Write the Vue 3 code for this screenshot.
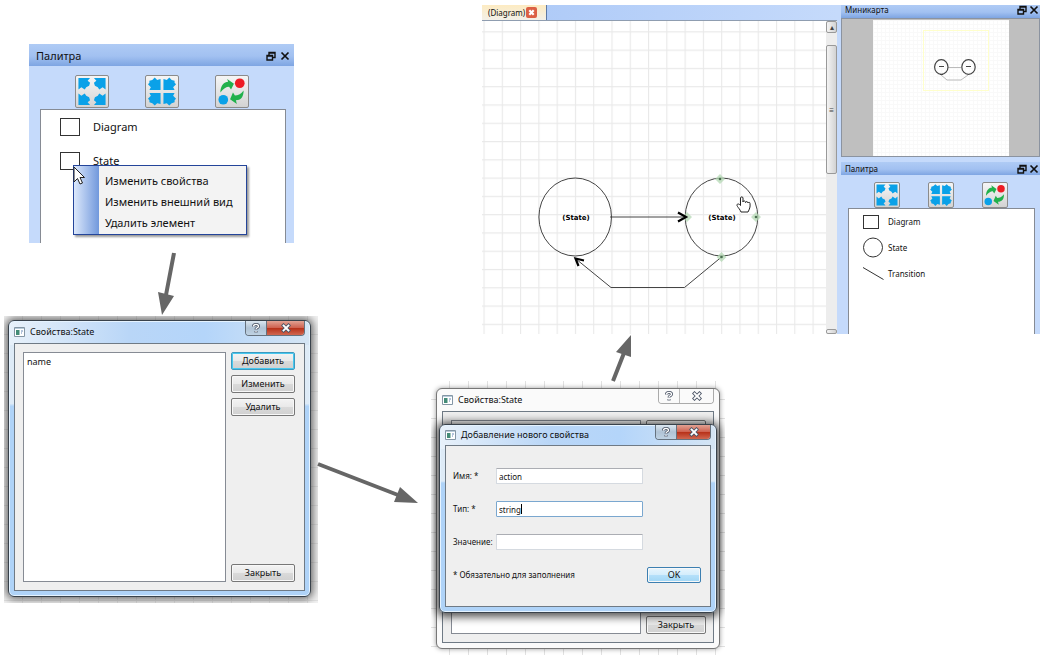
<script setup>
import { ref, h } from 'vue'

const name = ref('action')
const type = ref('string')
const value = ref('')
const property = ref('')

const icon = (children) => () => h('svg', { viewBox: '0 0 32 32', width: '100%', height: '100%', 'aria-hidden': 'true' }, children())
const blue = '#0aa1e8'
const corners = (d) => [
  [1, 1, 0, 0], [-1, 1, 32, 0], [1, -1, 0, 32], [-1, -1, 32, 32]
].map(([sx, sy, tx, ty]) => h('path', { d, fill: blue, transform: `matrix(${sx} 0 0 ${sy} ${tx} ${ty})` }))

const ExpandIcon = icon(() => corners('M2 2H14L11.500 5L14 7L13 10L10 11.500L8.500 14L5 11.500L2 14Z'))
const CollapseIcon = icon(() => corners('M14.500 14.500H3L4.500 11.500L1.500 8.500L3 7V5L6 4L8.500 1.500L11 4L14.500 3Z'))
const RefreshIcon = icon(() => [
  h('circle', { cx: 24, cy: 7.5, r: 5, fill: '#ed1c24' }),
  h('circle', { cx: 7, cy: 24.5, r: 5, fill: blue }),
  h('path', { d: 'M4 17C4 10 8 6 12 6L11 3L18 8L15 14L13 11C10 11 7 13 4 17Z', fill: '#22b14c' }),
  h('path', { d: 'M28 15C28 22 25 25 20 25L21 29L14 24L17 17L19 20C22 20 25 19 28 15Z', fill: '#22b14c' })
])
const tools = [
  { label: 'Развернуть', glyph: ExpandIcon },
  { label: 'Свернуть', glyph: CollapseIcon },
  { label: 'Обновить', glyph: RefreshIcon }
]

const RestoreIcon = () => h('svg', { viewBox: '0 0 10 10', width: 10, height: 10, fill: 'none', stroke: '#111' }, [
  h('path', { d: 'M3 4V1.500H9V6.500H7M3 2H9', 'stroke-width': 1.4 }),
  h('path', { d: 'M1 4.500H6.500V9H1ZM1 5H6', 'stroke-width': 1.4 })
])
const CrossIcon = () => h('svg', { viewBox: '0 0 10 10', width: 10, height: 10, fill: 'none', stroke: '#111' }, [
  h('path', { d: 'M1.500 1.500L8.500 8.500M8.500 1.500L1.500 8.500', 'stroke-width': 1.7 })
])
const AppIcon = () => h('svg', { viewBox: '0 0 11 10', width: 11, height: 10 }, [
  h('path', { d: 'M.5 .5H10.500V9.500H.5Z', fill: '#fff', stroke: '#8496a5' }),
  h('path', { d: 'M1 1H10V2H1Z', fill: '#b8cbd9' }),
  h('path', { d: 'M2 3H5.500V8H2Z', fill: '#438b76' }),
  h('path', { d: 'M7 4H9M7 6H8', stroke: '#6788b8' })
])
const HelpIcon = () => h('svg', { viewBox: '0 0 10 10', width: 10, height: 10, fill: 'none' }, [
  h('path', { d: 'M2.500 3.500C2.500 .8 7.500 .8 7.500 3.200C7.500 4.800 5 4.800 5 6.500M5 8V9.500', stroke: '#4c5566', 'stroke-width': 3 }),
  h('path', { d: 'M2.500 3.500C2.500 .8 7.500 .8 7.500 3.200C7.500 4.800 5 4.800 5 6.300M5 8V9.300', stroke: '#fff', 'stroke-width': 1.3 })
])
const CloseIcon = () => h('svg', { viewBox: '0 0 10 10', width: 10, height: 10, fill: 'none' }, [
  h('path', { d: 'M2.500 2.500L7.500 7.500M7.500 2.500L2.500 7.500', stroke: '#4c5566', 'stroke-width': 3.6, 'stroke-linecap': 'square' }),
  h('path', { d: 'M2.500 2.500L7.500 7.500M7.500 2.500L2.500 7.500', stroke: '#fff', 'stroke-width': 1.8, 'stroke-linecap': 'square' })
])
</script>

<template>
  <main class="board">
    <section class="palette palette-large">
      <header class="dock-title">
        <span>Палитра</span>
        <div class="dock-buttons"><button type="button" aria-label="Открепить"><RestoreIcon /></button><button type="button" aria-label="Закрыть панель"><CrossIcon /></button></div>
      </header>
      <div class="tools">
        <button v-for="t in tools" :key="t.label" type="button" :aria-label="t.label"><component :is="t.glyph" /></button>
      </div>
      <ul class="items">
        <li><svg class="shape" viewBox="0 0 20 18"><rect x=".5" y=".5" width="19" height="17" /></svg><span>Diagram</span></li>
        <li><svg class="shape" viewBox="0 0 20 18"><rect x=".5" y=".5" width="19" height="17" /></svg><span>State</span></li>
      </ul>
      <menu class="context">
        <li><button type="button">Изменить свойства</button></li>
        <li><button type="button">Изменить внешний вид</button></li>
        <li><button type="button">Удалить элемент</button></li>
      </menu>
      <svg class="pointer" viewBox="0 0 12 19"><path d="M1 1V16L4.500 12.500L7 18L9.500 17L7 11.500H11.500Z" fill="#fff" stroke="#222" /></svg>
    </section>

    <section class="backdrop backdrop-list">
      <div class="window win-list">
        <header class="caption">
          <AppIcon /><h2>Свойства:State</h2>
          <div class="caption-buttons">
            <button type="button" aria-label="Справка"><HelpIcon /></button>
            <button type="button" class="close" aria-label="Закрыть окно"><CloseIcon /></button>
          </div>
        </header>
        <div class="client">
          <select v-model="property" class="listbox" size="5" aria-label="Свойства"><option value="name">name</option></select>
          <div class="actions">
            <button type="button" class="push focused">Добавить</button>
            <button type="button" class="push">Изменить</button>
            <button type="button" class="push">Удалить</button>
            <button type="button" class="push last">Закрыть</button>
          </div>
        </div>
      </div>
    </section>

    <section class="backdrop backdrop-form">
      <div class="window win-behind">
        <header class="caption">
          <AppIcon /><h2>Свойства:State</h2>
          <div class="caption-buttons">
            <button type="button" aria-label="Справка"><HelpIcon /></button>
            <button type="button" class="close" aria-label="Закрыть окно"><CloseIcon /></button>
          </div>
        </header>
        <div class="client">
          <div class="listbox"></div>
          <div class="actions">
            <button type="button" class="push" aria-label="Добавить"></button>
            <button type="button" class="push last">Закрыть</button>
          </div>
        </div>
      </div>
      <div class="window win-form">
        <header class="caption">
          <AppIcon /><h2>Добавление нового свойства</h2>
          <div class="caption-buttons">
            <button type="button" aria-label="Справка"><HelpIcon /></button>
            <button type="button" class="close" aria-label="Закрыть окно"><CloseIcon /></button>
          </div>
        </header>
        <form class="client form" @submit.prevent>
          <div class="field"><label for="f-name">Имя: *</label><input id="f-name" v-model="name" type="text"></div>
          <div class="field"><label for="f-type">Тип: *</label><span class="edit"><input id="f-type" v-model="type" class="active" type="text"><i class="caret"></i></span></div>
          <div class="field"><label for="f-value">Значение:</label><input id="f-value" v-model="value" type="text"></div>
          <div class="submit"><span>* Обязательно для заполнения</span><button type="submit" class="push ok">OK</button></div>
        </form>
      </div>
    </section>

    <section class="editor">
      <div class="work">
        <div class="tabs">
          <div class="tab"><span>(Diagram)</span>
            <button type="button" aria-label="Закрыть вкладку"><svg viewBox="0 0 10 10"><path d="M3 3L7 7M7 3L3 7" stroke="#fff" stroke-width="2" /></svg></button>
          </div>
        </div>
        <div class="sheet">
          <svg class="scene" viewBox="0 0 344 313">
            <defs><pattern id="grid" x="1.500" y="10.300" width="18.280" height="18.280" patternUnits="userSpaceOnUse"><path d="M0 .5H18.300M.5 0V18.300" stroke="#e9e9e9" stroke-width="1.200" fill="none" /></pattern></defs>
            <rect width="344" height="313" fill="url(#grid)" />
            <g stroke="#444" fill="none">
              <ellipse cx="93.200" cy="196" rx="36.300" ry="39" />
              <ellipse cx="239.500" cy="196" rx="36.300" ry="39" />
              <path d="M128 196H203M239.500 236L202.500 266.500H129L94 238" />
            </g>
            <g fill="#b4d8b4" opacity=".75">
              <path d="M238 153L243 158L238 163L233 158ZM205 191L210 196L205 201L200 196ZM274 191L279 196L274 201L269 196ZM239.500 231L244.500 236L239.500 241L234.500 236Z" />
            </g>
            <g fill="#4b7050"><circle cx="238" cy="158" r="1.300" /><circle cx="274" cy="196" r="1.300" /><circle cx="239.500" cy="236" r="1.300" /></g>
            <path d="M196 191.500L204 196L196 200.500M96.500 245L93.500 237.500L102 239.500" fill="none" stroke="#000" stroke-width="2.200" />
            <text x="94" y="199" text-anchor="middle">(State)</text>
            <text x="240" y="199" text-anchor="middle">(State)</text>
            <path d="M258.500 184V177C258.500 175.500 261 175.500 261 177V181C261 179.500 263.500 179.500 263.500 181.500C264 180 266 180.500 266 182C266.500 181 268 181 268 182.500C268.500 186 267.500 188 266 191H259C258 188.500 256.500 187 255.500 185.500C254 183.500 256 181.500 258.500 184.500Z" fill="#fff" stroke="#222" />
          </svg>
          <div class="scroll"><span class="arrow">▴</span><span class="thumb">≡</span><span class="arrow end"></span></div>
        </div>
      </div>
      <aside class="docks">
        <section class="minimap">
          <header class="dock-title">
            <span>Миникарта</span>
            <div class="dock-buttons"><button type="button" aria-label="Открепить"><RestoreIcon /></button><button type="button" aria-label="Закрыть панель"><CrossIcon /></button></div>
          </header>
          <div class="map">
            <svg viewBox="0 0 136 136">
              <defs><pattern id="mini" width="4" height="4" patternUnits="userSpaceOnUse"><path d="M0 .5H4M.5 0V4" stroke="#f9f9f9" fill="none" /></pattern></defs>
              <rect width="136" height="136" fill="#fff" /><rect width="136" height="136" fill="url(#mini)" />
              <rect x="50.500" y="10.500" width="65" height="60" fill="none" stroke="#ffffcc" />
              <path d="M75 47.500H88M95 55L88 60H74L68 55" fill="none" stroke="#bbb" />
              <g fill="none" stroke="#444" stroke-width="1.200"><ellipse cx="68.300" cy="47" rx="6.700" ry="7.300" /><ellipse cx="95.500" cy="47" rx="6.700" ry="7.300" /><path d="M66 46.500H71M93 46.500H98M67 54.500H70" /></g>
            </svg>
          </div>
        </section>
        <section class="palette palette-small">
          <header class="dock-title">
            <span>Палитра</span>
            <div class="dock-buttons"><button type="button" aria-label="Открепить"><RestoreIcon /></button><button type="button" aria-label="Закрыть панель"><CrossIcon /></button></div>
          </header>
          <div class="tools">
            <button v-for="t in tools" :key="t.label" type="button" :aria-label="t.label"><component :is="t.glyph" /></button>
          </div>
          <ul class="items">
            <li><svg class="shape" viewBox="0 0 22 22"><rect x="1.500" y="4.500" width="15" height="13" /></svg><span>Diagram</span></li>
            <li><svg class="shape" viewBox="0 0 22 22"><circle cx="11" cy="10.500" r="9.500" /></svg><span>State</span></li>
            <li><svg class="shape" viewBox="0 0 22 22"><path d="M1 4.500L21.500 16.500" /></svg><span>Transition</span></li>
          </ul>
        </section>
      </aside>
    </section>

    <svg class="flow" width="660" height="520" aria-hidden="true">
      <g stroke="#666" stroke-width="4" fill="none"><path d="M174 253L166 295M318 464L398 495M613 381L624 353" /></g>
      <g fill="#666"><path d="M162 315L158 292L174 296ZM418 503L394 502L400 487ZM631 335L616 352L631 357Z" /></g>
    </svg>
  </main>
</template>

<style>
html, body { margin: 0; background: #fff; }
</style>

<style scoped>
.board { position: relative; min-height: 660px; overflow: hidden; font-family: "Noto Sans", "Open Sans", sans-serif; font-size: 8px; line-height: 12px; color: #111; }
.board * { box-sizing: border-box; }
button, input, select { font: inherit; color: inherit; margin: 0; }
button { padding: 0; }
h2 { margin: 0; font: inherit; }
ul, menu { margin: 0; padding: 0; list-style: none; }
svg { display: block; flex: none; }

.dock-title { display: flex; align-items: center; justify-content: space-between; background: linear-gradient(#afcbf5, #a2c1f1 55%, #7ea5e2); }
.dock-buttons { display: flex; gap: 4px; }
.dock-buttons button { border: 0; background: none; }
.palette { background: #c5dafb; display: flex; flex-direction: column; }
.palette-large { position: absolute; left: 29px; top: 44px; width: 265px; height: 199px; font-size: 11px; line-height: 16px; }
.palette-large .dock-title { height: 22px; padding: 2px 4px 0 7px; }
.tools { display: flex; justify-content: center; }
.tools button { border: 1px solid #8b8b8b; border-radius: 2px; background: linear-gradient(#f5f5f5, #e5e5e5 50%, #d3d3d3); }
.palette-large .tools { gap: 36px; padding: 9px 0 1px; }
.palette-large .tools button { width: 34px; height: 33px; }
.items { flex: 1; background: #fff; border: 1px solid #868b94; border-bottom: 0; }
.items li { display: flex; align-items: center; }
.palette-large .items { margin: 0 8px 0 11px; padding: 0 19px; }
.palette-large .items li { height: 34px; gap: 13px; }
.shape { fill: none; stroke: #333; }
.palette-large .shape { width: 20px; height: 18px; }
.context { position: absolute; left: 44px; top: 121px; width: 174px; padding: 4px 0 1px 31px; border: 1px solid #24459a; box-shadow: 2px 2px 2px #0006; background: linear-gradient(90deg, #dce8fb, #7198dc) 0 0 / 25px 100% no-repeat #f3f3f3; }
.context button { display: block; height: 21px; border: 0; background: none; white-space: nowrap; }
.pointer { position: absolute; left: 44px; top: 122px; width: 12px; height: 19px; }

.backdrop { position: absolute; overflow: hidden; background: repeating-linear-gradient(90deg, transparent 0 18px, #e2e2e2 18px 19px), repeating-linear-gradient(transparent 0 18px, #e2e2e2 18px 19px), #fff; }
.backdrop-list { left: 4px; top: 316px; width: 314px; height: 287px; background-color: #f2f2f2; }
.backdrop-form { left: 431px; top: 381px; width: 294px; height: 274px; }
.window { position: absolute; display: flex; flex-direction: column; padding: 0 5px 5px; border: 1px solid #39424b; border-radius: 6px; box-shadow: 0 0 8px 2px #0009, inset 0 0 0 1px #e5f3ff; }
.win-list { left: 4px; top: 4px; width: 303px; height: 277px; }
.win-list, .win-form { background: linear-gradient(90deg, #e8f1fa, #b9d6f7 40%, #b4d5fa 65%, #d5e5f4) 0 0 / 100% 24px no-repeat, linear-gradient(#deebf7 0 30%, #afd3f8 31% 100%); }
.win-behind { left: 5px; top: 7px; width: 284px; height: 261px; background: #fafafa; border-color: #777; box-shadow: 0 0 5px #0006; }
.win-form { left: 8px; top: 43px; width: 278px; height: 189px; box-shadow: 0 1px 9px 3px #000a, inset 0 0 0 1px #e5f3ff; }
.caption { display: flex; align-items: center; gap: 5px; height: 22px; flex: none; font-size: 9px; line-height: 14px; }
.win-form .caption { height: 20px; }
.caption-buttons { display: flex; align-self: flex-start; margin-left: auto; border: 1px solid #66727e; border-top: 0; border-radius: 0 0 4px 4px; overflow: hidden; }
.caption-buttons button { display: grid; place-items: center; width: 21px; height: 14px; border: 0; border-right: 1px solid #66727e; background: linear-gradient(#dbe6f0, #b0c3d5 50%, #bfd2e3); }
.caption-buttons .close { width: 37px; border-right: 0; background: linear-gradient(#e2a293, #cf6250 48%, #b72f17 50%, #d06750); }
.win-form .close, .win-behind .close { width: 33px; }
.win-behind .caption-buttons { border-color: #aaa; }
.win-behind .caption-buttons button { background: #fafafa; border-color: #bbb; }
.client { flex: 1; display: flex; gap: 5px; min-height: 0; padding: 8px 9px 8px 8px; border: 1px solid #6f7a85; background: #efefef; }
.listbox { flex: 1; appearance: none; min-width: 0; padding: 2px 3px; border: 1px solid #868b94; border-radius: 0; background: #fff; outline: 0; overflow: hidden; font-size: 9px; line-height: 12px; }
.listbox option { padding: 0; min-height: 12px; }
.actions { display: flex; flex-direction: column; gap: 5px; width: 64px; }
.win-behind .actions { width: 60px; }
.win-behind .client { padding-right: 7px; }
.push { height: 18px; border: 1px solid #777; border-radius: 2px; background: linear-gradient(#f3f3f3, #e9e9e9 50%, #dadada 51%, #d0d0d0); box-shadow: inset 0 0 0 1px #f8f8f8; font-size: 9px; line-height: 12px; }
.focused { border-color: #3c9ac0; box-shadow: inset 0 0 0 1px #48c8ef; }
.last { margin-top: auto; }
.form { flex-direction: column; gap: 17px; padding: 22px 9px 10px 7px; }
.field, .submit { display: flex; align-items: center; }
.field label { width: 43px; }
.field input { width: 147px; height: 16px; padding: 0 2px; border: 1px solid #d5dae0; border-top-color: #abadb3; border-radius: 1px; background: #fff; outline: 0; }
.field input.active { border-color: #7aa7cf; }
.edit { position: relative; display: flex; }
.caret { position: absolute; left: 25px; top: 3px; width: 1px; height: 10px; background: #000; }
.submit { justify-content: space-between; }
.ok { width: 54px; height: 16px; border-color: #3c7fb1; background: linear-gradient(#e8f5fd, #d3edfc 50%, #b5e0fa 51%, #a0d6f5); }

.editor { position: absolute; left: 482px; right: 6px; top: 5px; height: 329px; display: flex; background: #c5dafb; overflow: hidden; }
.work { flex: 1; min-width: 0; display: flex; flex-direction: column; margin-right: 4px; }
.tabs { height: 16px; flex: none; display: flex; background: linear-gradient(90deg, #abc8f7, #c5dafb); border-bottom: 1px solid #8f9db0; }
.tab { display: flex; align-items: center; gap: 1px; width: 65px; padding-left: 6px; background: linear-gradient(#fdebc2, #f3f0e8); border-right: 1px solid #5c78a5; }
.tab button { width: 11px; height: 11px; border: 0; border-radius: 2px; background: #dc6044; }
.sheet { flex: 1; min-height: 0; display: flex; background: #fff; }
.scene { flex: 1; min-width: 0; height: 313px; }
.scene text { font: bold 7px "DejaVu Sans", "Noto Sans", sans-serif; }
.scroll { width: 11px; display: flex; flex-direction: column; background: #ededed; font-size: 8px; color: #444; }
.scroll span { display: grid; place-items: center; border: 1px solid #999; border-radius: 2px; background: linear-gradient(90deg, #f4f4f4, #d2d2d2); }
.arrow { height: 12px; line-height: 8px; }
.scroll .end { height: 5px; margin-top: auto; }
.scroll .thumb { height: 129px; margin-top: 12px; }
.docks { width: 199px; display: flex; flex-direction: column; }
.docks .dock-title { height: 13px; padding: 0 1px 0 4px; }
.docks .dock-buttons { gap: 2px; }
.docks .minimap .dock-title { padding-bottom: 3px; }
.map { display: flex; justify-content: center; height: 139px; background: #bfbfbf; border: 1px solid #8b93a0; margin-bottom: 5px; padding-top: 1px; }
.map svg { width: 136px; height: 136px; }
.palette-small { flex: 1; }
.palette-small .tools { gap: 28px; padding: 7px 0 0; }
.palette-small .tools button { width: 26px; height: 26px; }
.palette-small .items { margin: 0 5px 0 7px; padding: 0 13px; }
.palette-small .items li { height: 26px; gap: 4px; }
.palette-small .shape { width: 22px; height: 22px; }

.flow { position: absolute; left: 0; top: 0; pointer-events: none; }
</style>
